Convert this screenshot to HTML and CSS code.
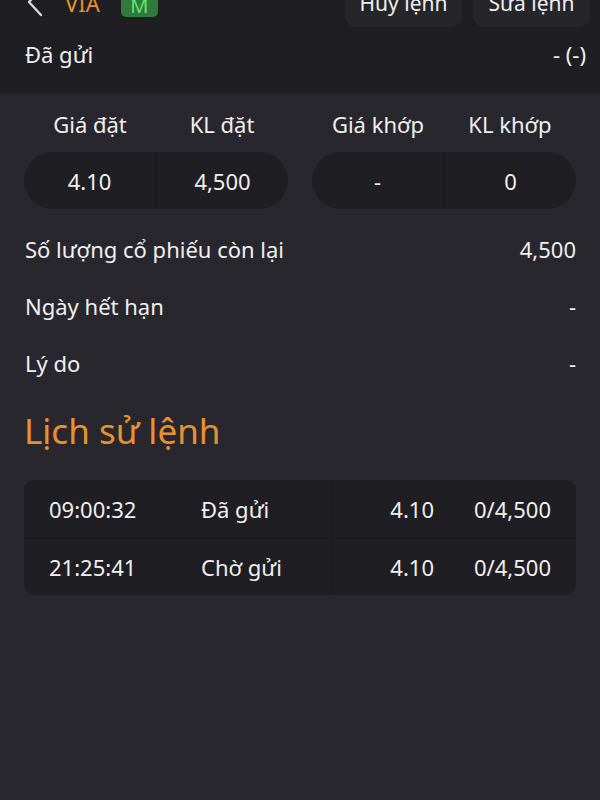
FILE: index.html
```html
<!DOCTYPE html>
<html lang="vi">

<head>
    <meta charset="UTF-8">
    <meta name="viewport" content="width=device-width, initial-scale=1.0">
    <title>Chi tiết lệnh</title>
    <link rel="stylesheet" href="styles.css">
</head>

<body>
    <!-- phần trên: tiêu đề + trạng thái -->
    <div class="top">
        <div class="header">
            <div class="back">
                <svg width="22" height="30" viewBox="0 0 22 30">
                    <path d="M17 2 L5 15 L17 28" fill="none" stroke="#d8d8d8" stroke-width="2.4" stroke-linecap="round" stroke-linejoin="round" />
                </svg>
            </div>
            <div class="symbol">VIA</div>
            <div class="badge">M</div>
            <div class="actions">
                <div class="btn">Hủy lệnh</div>
                <div class="btn">Sửa lệnh</div>
            </div>
        </div>
        <div class="status_row">
            <span>Đã gửi</span>
            <span class="status_val">- (-)</span>
        </div>
    </div>

    <div class="main">
        <!-- giá / khối lượng -->
        <div class="price_grid">
            <div class="group">
                <div class="col_titles">
                    <div>Giá đặt</div>
                    <div>KL đặt</div>
                </div>
                <div class="pill">
                    <div>4.10</div>
                    <div>4,500</div>
                </div>
            </div>
            <div class="group">
                <div class="col_titles">
                    <div>Giá khớp</div>
                    <div>KL khớp</div>
                </div>
                <div class="pill">
                    <div>-</div>
                    <div>0</div>
                </div>
            </div>
        </div>

        <div class="info_list">
            <div class="info_row">
                <span>Số lượng cổ phiếu còn lại</span>
                <span>4,500</span>
            </div>
            <div class="info_row">
                <span>Ngày hết hạn</span>
                <span>-</span>
            </div>
            <div class="info_row">
                <span>Lý do</span>
                <span>-</span>
            </div>
        </div>

        <h2 class="history_title">Lịch sử lệnh</h2>

        <div class="history">
            <div class="h_row">
                <div class="h_time">09:00:32</div>
                <div class="h_status">Đã gửi</div>
                <div class="h_price">4.10</div>
                <div class="h_vol">0/4,500</div>
            </div>
            <div class="h_row">
                <div class="h_time">21:25:41</div>
                <div class="h_status">Chờ gửi</div>
                <div class="h_price">4.10</div>
                <div class="h_vol">0/4,500</div>
            </div>
        </div>
    </div>
</body>

</html>
```

FILE: styles.css
```css
* {
    margin: 0;
    padding: 0;
    box-sizing: border-box;
}

body {
    background-color: #28272d;
    color: #f0f0f0;
    font-family: "Noto Sans", "Noto Sans CJK SC", sans-serif;
    font-size: 22px;
    overflow: hidden;
}

/* phần trên (trang đã cuộn nên đầu bị cắt) */
.top {
    background-color: #1f1e23;
    height: 122px;
    margin-top: -28px;
}

.header {
    display: flex;
    align-items: center;
    height: 56px;
    padding-left: 24px;
    padding-right: 10px;
}

.back {
    display: flex;
    width: 22px;
    margin-top: 4px;
}

.symbol {
    color: #e8922e;
    margin-left: 19px;
    font-size: 22px;
    margin-top: 6px;
}

.badge {
    margin-left: 21px;
    width: 37px;
    height: 34px;
    border-radius: 5px;
    background-color: #2f7a3c;
    color: #63e36f;
    font-size: 20px;
    text-align: center;
    line-height: 46px;
}

.actions {
    margin-left: auto;
    display: flex;
    gap: 11px;
}

.btn {
    width: 117px;
    height: 54px;
    border-radius: 12px;
    background-color: #26252a;
    text-align: center;
    line-height: 60px;
    font-size: 21px;
}

.status_row {
    display: flex;
    justify-content: space-between;
    align-items: center;
    height: 52px;
    padding-left: 25px;
    padding-right: 14px;
}

/* phần chính */
.main {
    padding: 16px 24px 0;
}

.price_grid {
    display: flex;
    gap: 24px;
}

.group {
    flex: 1;
}

.col_titles {
    display: flex;
    height: 28px;
    line-height: 28px;
    margin-bottom: 14px;
}

.col_titles div {
    flex: 1;
    text-align: center;
}

.pill {
    display: flex;
    height: 57px;
    border-radius: 29px;
    background-color: #1f1e23;
    overflow: hidden;
}

.pill div {
    flex: 1;
    display: flex;
    align-items: center;
    justify-content: center;
}

.pill div:first-child {
    border-right: 2px solid #1a191d;
}

.info_list {
    margin-top: 11px;
}

.info_row {
    display: flex;
    justify-content: space-between;
    align-items: center;
    height: 57px;
    padding-left: 1px;
}

.history_title {
    color: #e8922e;
    font-weight: normal;
    font-size: 35px;
    margin-top: 15px;
    height: 50px;
    line-height: 50px;
}

.history {
    margin-top: 24px;
    background-color: #1f1e23;
    border-radius: 10px;
    overflow: hidden;
}

.h_row {
    display: grid;
    grid-template-columns: 152px 157px 112px 131px;
    height: 57.5px;
}

.h_row + .h_row {
    border-top: 1px solid #1b1a1e;
}

.h_row div {
    display: flex;
    align-items: center;
}

.h_time,
.h_status {
    padding-left: 25px;
}

.h_status {
    border-right: 1px solid #1b1a1e;
}

.h_price {
    justify-content: flex-end;
    padding-right: 11px;
}

.h_vol {
    justify-content: flex-end;
    padding-right: 25px;
}
```
